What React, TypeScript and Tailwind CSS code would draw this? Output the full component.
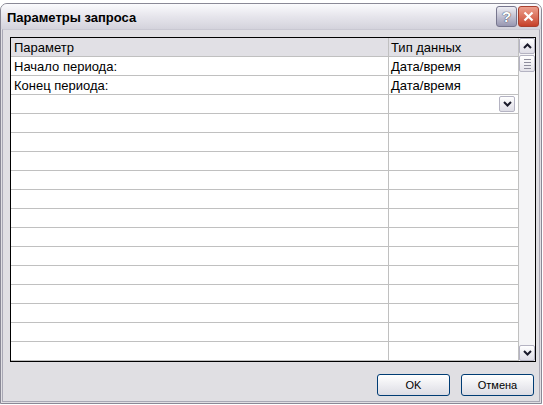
import React from "react";

const rows: { name: string; type: string; combo?: boolean }[] = [
  { name: "Начало периода:", type: "Дата/время" },
  { name: "Конец периода:", type: "Дата/время" },
  { name: "", type: "", combo: true },
  ...Array.from({ length: 13 }, () => ({ name: "", type: "" })),
];

function ChevronUp() {
  return (
    <svg width="9" height="6" viewBox="0 0 9 6">
      <path d="M1 5 L4.5 1.5 L8 5" fill="none" stroke="#1a1a2a" strokeWidth="2" />
    </svg>
  );
}

function ChevronDown() {
  return (
    <svg width="9" height="6" viewBox="0 0 9 6">
      <path d="M1 1 L4.5 4.5 L8 1" fill="none" stroke="#1a1a2a" strokeWidth="2" />
    </svg>
  );
}

function ScrollButton({ down }: { down?: boolean }) {
  return (
    <div className="flex h-[16px] w-[16px] items-center justify-center rounded-[2px] border border-[#b4b3c2] bg-gradient-to-b from-[#ffffff] to-[#dedde6]">
      {down ? <ChevronDown /> : <ChevronUp />}
    </div>
  );
}

export default function App() {
  return (
    <div
      className="h-[405px] w-[543px] overflow-hidden bg-white pt-[3px]"
      style={{ fontFamily: '"Liberation Sans", Arial, sans-serif' }}
    >
      <div className="flex h-[401px] w-[542px] flex-col overflow-hidden rounded-t-[7px] border border-[#8a8996] bg-[#e0dfe3]">
        {/* Title bar */}
        <div className="flex h-[25px] shrink-0 items-start justify-between bg-gradient-to-b from-[#fbfbfd] via-[#e6e5ec] to-[#d4d3dc] pr-[2px]">
          <div className="pl-[6px] pt-[6px] text-[13px] font-bold leading-[16px] text-black">
            Параметры запроса
          </div>
          <div className="flex gap-[1px] pt-[2px]">
            <div className="flex h-[21px] w-[21px] items-center justify-center rounded-[3px] border border-[#77768e] bg-gradient-to-b from-[#eeeef4] to-[#9897b1] text-[15px] font-bold leading-none text-white [text-shadow:0_0_1px_#3a3a4a,0_0_1px_#3a3a4a]">
              ?
            </div>
            <div className="flex h-[21px] w-[21px] items-center justify-center rounded-[3px] border border-[#a8402f] bg-gradient-to-b from-[#ec9f8d] to-[#c63f28]">
              <svg width="11" height="11" viewBox="0 0 11 11">
                <path d="M1.5 1.5 L9.5 9.5 M9.5 1.5 L1.5 9.5" stroke="white" strokeWidth="2.2" />
              </svg>
            </div>
          </div>
        </div>

        {/* Body */}
        <div className="mx-[1px] mb-[1px] flex flex-1 flex-col border-x border-b border-t border-[#a9a8b5] border-t-[#c9c8d2] pl-[7px] pt-[7px]">
          <div className="flex h-[325px] w-[526px] border border-black bg-white">
            <div className="flex flex-1 flex-col">
              <div className="flex h-[19px] border-b border-[#c0c0c0] bg-[#e1e0e5] text-[13px] text-black">
                <div className="w-[378px] border-r border-[#c0c0c0] pl-[3px] pt-[2px] leading-[16px]">Параметр</div>
                <div className="flex-1 pl-[2px] pt-[2px] leading-[16px]">Тип данных</div>
              </div>
              {rows.map((r, i) => (
                <div key={i} className="flex h-[19px] border-b border-[#c0c0c0] text-[13px] text-black">
                  <div className="w-[378px] border-r border-[#c0c0c0] pl-[3px] pt-[2px] leading-[16px]">{r.name}</div>
                  <div className="flex flex-1 items-center justify-between pl-[2px] pr-[3px]">
                    <span className="self-start pt-[2px] leading-[16px]">{r.type}</span>
                    {r.combo && (
                      <div className="flex h-[16px] w-[16px] items-center justify-center rounded-[2px] border border-[#b4b3c2] bg-gradient-to-b from-[#ffffff] to-[#dedde6]">
                        <ChevronDown />
                      </div>
                    )}
                  </div>
                </div>
              ))}
            </div>
            {/* Scrollbar */}
            <div className="flex w-[17px] flex-col items-center justify-between border-l border-[#c0c0c0] bg-[#f4f4f6]">
              <div className="flex flex-col items-center gap-[1px]">
                <ScrollButton />
                <div className="flex h-[17px] w-[16px] flex-col items-center justify-center gap-[2px] rounded-[2px] border border-[#b4b3c2] bg-gradient-to-b from-[#ffffff] to-[#e4e3ea]">
                  <div className="h-[1px] w-[7px] bg-[#8e8d9c]" />
                  <div className="h-[1px] w-[7px] bg-[#8e8d9c]" />
                  <div className="h-[1px] w-[7px] bg-[#8e8d9c]" />
                  <div className="h-[1px] w-[7px] bg-[#8e8d9c]" />
                </div>
              </div>
              <ScrollButton down />
            </div>
          </div>

          {/* Buttons */}
          <div className="mt-[12px] flex justify-end gap-[11px] pr-[5px]">
            <button className="h-[22px] w-[73px] rounded-[3px] border border-[#003c74] bg-gradient-to-b from-[#ffffff] to-[#dcdce4] text-[11px] text-black">
              OK
            </button>
            <button className="h-[22px] w-[73px] rounded-[3px] border border-[#003c74] bg-gradient-to-b from-[#ffffff] to-[#dcdce4] text-[11px] text-black">
              Отмена
            </button>
          </div>
        </div>
      </div>
    </div>
  );
}
